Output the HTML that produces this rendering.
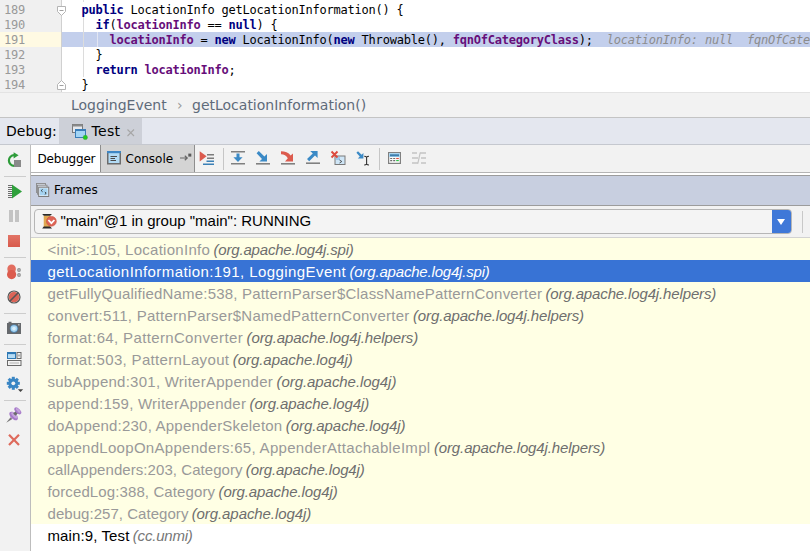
<!DOCTYPE html>
<html><head><meta charset="utf-8"><title>Debug</title>
<style>
html,body{margin:0;padding:0}
body{width:810px;height:551px;overflow:hidden;background:#fff;position:relative;font-family:"DejaVu Sans","Liberation Sans",sans-serif;}
.abs{position:absolute}
svg{position:absolute;overflow:visible}
#code{left:0;top:0;width:810px;height:92px;background:#fff;overflow:hidden}
#gutter{left:0;top:0;width:61px;height:92px;background:#f0f0f0;border-right:1px solid #d0d0d0}
.ln{position:absolute;left:4px;width:40px;height:15px;font:12px/15px "DejaVu Sans Mono","Liberation Mono",monospace;color:#999;letter-spacing:-0.22px}
.cl{position:absolute;left:81.4px;height:15px;white-space:pre;font:12px/15px "DejaVu Sans Mono","Liberation Mono",monospace;color:#000;letter-spacing:-0.22px}
.k{color:#000080;font-weight:bold}
.f{color:#660e7a;font-weight:bold}
.h{color:#8c8c8c;font-style:italic}
#crumb{left:0;top:92px;width:810px;height:26px;background:#f2f2f2;border-top:1px solid #e3e3e3;box-sizing:border-box;border-bottom:1px solid #c4c4c4}
#crumb span{position:absolute;top:4px;font-size:14px;line-height:16px;color:#5f6b7a;white-space:pre}
#dbg{left:0;top:118px;width:810px;height:27px;background:#e4e7ef;border-bottom:1px solid #c5c8cf;box-sizing:border-box}
#dbg span{position:absolute;font-size:14px;line-height:18px;color:#000}
#side{left:0;top:145px;width:30px;height:406px;background:#f2f2f2;border-right:1px solid #bdbdbd}
.sep{position:absolute;left:4px;width:22px;height:1px;background:#cdcdcd}
#tabs{left:31px;top:145px;width:779px;height:27px;background:#f2f2f2}
#tabs span{position:absolute;font-size:12px;line-height:16px;color:#000}
.vsep{position:absolute;width:1px;background:#c6c6c6}
.row{position:absolute;left:31px;width:779px;height:22px;line-height:22px;font-family:"Liberation Sans","DejaVu Sans",sans-serif;font-size:15px;color:#999;white-space:pre;background:#ffffe4}
.row span{position:absolute;left:16.5px;top:1px}
.row i{position:absolute;top:1px;font-style:italic;color:#6e6e6e}
.row.sel{background:#3873d5;color:#fff}
.row.sel i{color:#fff}
.row.last{background:#fff;color:#000}
.row.last i{color:#777}
</style></head><body>
<div id="code" class="abs">
 <div class="abs" style="left:0;top:32px;width:810px;height:15px;background:#c3cfec"></div>
 <div id="gutter" class="abs"></div>
 <div class="abs" style="left:0;top:32px;width:61px;height:15px;background:#fffae3"></div>
 <div class="ln" style="top:3px">189</div>
 <div class="ln" style="top:18px">190</div>
 <div class="ln" style="top:33px">191</div>
 <div class="ln" style="top:48px">192</div>
 <div class="ln" style="top:63px">193</div>
 <div class="ln" style="top:78px">194</div>
 <div class="abs" style="left:83px;top:0;width:1px;height:2px;background:#dcdcdc"></div>
 <div class="abs" style="left:83px;top:17px;width:1px;height:60px;background:#dcdcdc"></div>
 <div class="abs" style="left:97px;top:32px;width:1px;height:15px;background:#e2e6f2"></div>
 <svg style="left:57px;top:6px" width="10" height="10" viewBox="0 0 10 10"><path d="M0.5 0.5H8.5V5.5L4.5 9.5L0.5 5.5Z" fill="#fff" stroke="#b4b4b4"/><path d="M2.5 4.5H6.5" stroke="#a0a0a0"/></svg>
 <svg style="left:57px;top:80px" width="10" height="10" viewBox="0 0 10 10"><path d="M0.5 9.5H8.5V4.5L4.5 0.5L0.5 4.5Z" fill="#fff" stroke="#b4b4b4"/><path d="M2.5 5.5H6.5" stroke="#a0a0a0"/></svg>
 <div class="cl" style="top:3px"><span class="k">public</span> LocationInfo getLocationInformation() {</div>
 <div class="cl" style="top:18px">  <span class="k">if</span>(<span class="f">locationInfo</span> == <span class="k">null</span>) {</div>
 <div class="cl" style="top:33px">    <span class="f">locationInfo</span> = <span class="k">new</span> LocationInfo(<span class="k">new</span> Throwable(), <span class="f">fqnOfCategoryClass</span>);  <span class="h">locationInfo: null  fqnOfCategoryClass: "org.apache.log4j.Category"</span></div>
 <div class="cl" style="top:48px">  }</div>
 <div class="cl" style="top:63px">  <span class="k">return</span> <span class="f">locationInfo</span>;</div>
 <div class="cl" style="top:78px">}</div>
</div>
<div id="crumb" class="abs"><span style="left:71px">LoggingEvent</span><span style="left:177px;color:#999">›</span><span style="left:192px">getLocationInformation()</span></div>
<div id="dbg" class="abs">
 <div class="abs" style="left:59px;top:0;width:83px;height:26px;background:#cdd0d8"></div>
 <span style="left:6px;top:4px">Debug:</span>
 <svg style="left:72px;top:6px" width="16" height="16" viewBox="0 0 16 16"><rect x="0.5" y="0.5" width="10" height="8" fill="#e6e8ec" stroke="#7a7a7a"/><rect x="0.5" y="0.5" width="10" height="2" fill="#8a8a8a"/><rect x="3.5" y="5.5" width="10" height="8" fill="#a3d5f5" stroke="#3a7db8"/><rect x="3.5" y="5" width="10" height="2" fill="#3a7db8"/><circle cx="13.3" cy="13.4" r="2.2" fill="#1ccf1c" stroke="#3f9a3f" stroke-width="0.5"/></svg>
 <span style="left:91.5px;top:4px;letter-spacing:0.3px">Test</span>
 <svg style="left:127px;top:11px" width="8" height="8" viewBox="0 0 8 8"><path d="M0.5 0.5L7 7M7 0.5L0.5 7" stroke="#a6a6a6" stroke-width="1.1" fill="none"/></svg>
</div>
<div id="side" class="abs">
 <!-- rerun -->
 <svg style="left:6px;top:7px" width="16" height="16" viewBox="0 0 16 16"><path d="M8.2 3.2A5.3 5.3 0 1 0 8.2 13.8" fill="none" stroke="#2e9c3a" stroke-width="2.2"/><path d="M7.6 0.2L12.6 3.3L7.6 6.6Z" fill="#2e9c3a"/><rect x="8" y="8" width="7" height="7" fill="#8a8a8a"/></svg>
 <div class="sep" style="top:31px"></div>
 <!-- resume -->
 <svg style="left:7px;top:39px" width="16" height="16" viewBox="0 0 16 16"><path d="M1 1.5H5M1 3.5H5M1 5.5H5M1 7.5H5M1 9.5H5M1 11.5H5M1 13.5H5" stroke="#6e6e6e" stroke-width="1"/><path d="M5 0.5L15 7.5L5 14.5Z" fill="#2fa03c"/></svg>
 <!-- pause -->
 
 <div class="abs" style="left:9px;top:65px;width:4px;height:12px;background:#c3c3c3"></div>
 <div class="abs" style="left:15px;top:65px;width:4px;height:12px;background:#c3c3c3"></div>
 <!-- stop -->
 <div class="abs" style="left:8px;top:90px;width:12px;height:12px;background:linear-gradient(#e27466,#d85a4c)"></div>
 <div class="sep" style="top:112px"></div>
 <!-- view breakpoints -->
 <svg style="left:6px;top:119px" width="18" height="16" viewBox="0 0 18 16"><circle cx="5.6" cy="4.9" r="4.3" fill="#e26d5f"/><circle cx="5.6" cy="10.6" r="4.6" fill="#dc5b4d"/><circle cx="13" cy="6" r="1.9" fill="#909090"/><circle cx="13" cy="11" r="1.9" fill="#909090"/><circle cx="13" cy="6" r="0.8" fill="#c8c8c8"/><circle cx="13" cy="11" r="0.8" fill="#c8c8c8"/></svg>
 <!-- mute -->
 <svg style="left:7px;top:145px" width="14" height="14" viewBox="0 0 14 14"><circle cx="7" cy="7" r="5.2" fill="#dc6457"/><circle cx="7" cy="7" r="6" fill="none" stroke="#555" stroke-width="1.2"/><path d="M2.8 11.2L11.2 2.8" stroke="#555" stroke-width="1.6"/></svg>
 <div class="sep" style="top:168px"></div>
 <!-- camera -->
 <svg style="left:7px;top:176px" width="14" height="13" viewBox="0 0 14 13"><path d="M0 2H1.5V0.8H4.5V2H14V13H0Z" fill="#66696d"/><circle cx="7" cy="7.6" r="4.2" fill="#4f86b4"/><circle cx="7" cy="7.6" r="3.3" fill="#a9d6f3"/><circle cx="7" cy="7.6" r="1.8" fill="#d8eefb"/><rect x="11" y="3.2" width="1.6" height="1.2" fill="#c8c8c8"/></svg>
 <div class="sep" style="top:199px"></div>
 <!-- layout -->
 <svg style="left:7px;top:207px" width="15" height="14" viewBox="0 0 15 14"><rect x="0.5" y="0.5" width="8" height="6" fill="#b6dcf5" stroke="#2f79b5"/><rect x="0.5" y="0.5" width="8" height="1.6" fill="#2f79b5"/><rect x="10" y="0.5" width="4" height="6" fill="#f4f4f4" stroke="#6a6a6a"/><rect x="11.5" y="2.5" width="1" height="2" fill="#6a6a6a"/><rect x="0.5" y="8.5" width="13.5" height="5" fill="#f4f4f4" stroke="#6a6a6a"/><rect x="2.5" y="10.5" width="9.5" height="1" fill="#b0b0b0"/></svg>
 <!-- gear -->
 <svg style="left:6px;top:231px" width="18" height="17" viewBox="0 0 18 17"><g transform="translate(7.3,7.3)"><circle r="4.9" fill="#3a86c4"/><g fill="#3a86c4"><rect x="-1.5" y="-6.5" width="3" height="13"/><rect x="-1.5" y="-6.5" width="3" height="13" transform="rotate(45)"/><rect x="-1.5" y="-6.5" width="3" height="13" transform="rotate(90)"/><rect x="-1.5" y="-6.5" width="3" height="13" transform="rotate(135)"/></g><circle r="1.9" fill="#f2f2f2"/></g><path d="M11.8 13.2H17.2L14.5 16Z" fill="#444"/></svg>
 <div class="sep" style="top:255px"></div>
 <!-- pin -->
 <svg style="left:5px;top:262px" width="18" height="17" viewBox="0 0 18 17"><path d="M1.2 15.8L5.6 10.2L7.4 12Z" fill="#7a7a7a"/><ellipse cx="8.6" cy="9" rx="5.3" ry="3" transform="rotate(45 8.6 9)" fill="#a679c9"/><ellipse cx="9.4" cy="8.2" rx="4" ry="1.9" transform="rotate(45 9.4 8.2)" fill="#c3a3dc"/><rect x="9" y="4.6" width="3.2" height="3.6" transform="rotate(45 10.6 6.4)" fill="#6b6b6b"/><ellipse cx="12.8" cy="3.8" rx="4.3" ry="2.3" transform="rotate(45 12.8 3.8)" fill="#a679c9"/><ellipse cx="13.2" cy="3.4" rx="3" ry="1.2" transform="rotate(45 13.2 3.4)" fill="#c3a3dc"/></svg>
 <!-- close -->
 <svg style="left:8px;top:289px" width="12" height="12" viewBox="0 0 12 12"><path d="M1 0.8L11 11M11 0.8L1 11" stroke="#de6a5c" stroke-width="2.2" fill="none"/></svg>
</div>
<div id="tabs" class="abs">
 <div class="abs" style="left:0;top:0;width:69px;height:31px;background:#fff"></div>
 <div class="abs" style="left:69px;top:0;width:95px;height:28px;background:#d4d4d4;border:1px solid #8e8e8e;border-top:none;box-sizing:border-box"></div>
 <span style="left:6.5px;top:6px;letter-spacing:-0.2px">Debugger</span>
 <!-- console icon -->
 <svg style="left:76px;top:6px" width="14" height="14" viewBox="0 0 14 14"><rect x="0.75" y="0.75" width="12.5" height="12" fill="#b2dbf5" stroke="#6c6c6c" stroke-width="1.5"/><rect x="0" y="0" width="14" height="2.2" fill="#3d86c4"/><path d="M3.5 5.5H10M3.5 7.5H8M3.5 9.5H9" stroke="#4a4a4a" stroke-width="1"/></svg>
 <span style="left:94.5px;top:6px">Console</span>
 <!-- pin -->
 <svg style="left:149px;top:8px" width="12" height="10" viewBox="0 0 12 10"><path d="M0 5H7M4.8 2.8L7.2 5L4.8 7.2" stroke="#666" stroke-width="1.2" fill="none"/><rect x="8.3" y="0.6" width="3" height="3" fill="#5a5a5a"/></svg>
 <!-- show exec point -->
 <svg style="left:168px;top:6px" width="16" height="15" viewBox="0 0 16 15"><path d="M0.7 0.2L7.6 5.2L0.7 10.4Z" fill="#dc5b4e"/><path d="M8 3.8H15M8 7.2H15" stroke="#7c7c7c" stroke-width="1.6"/><path d="M7.5 10.3H15M4 13.3H15" stroke="#3b80b6" stroke-width="1.5"/></svg>
 <div class="vsep" style="left:192px;top:3px;height:22px"></div>
 <!-- step over -->
 <svg style="left:200px;top:6px" width="14" height="14" viewBox="0 0 14 14"><path d="M0 0.8H14M0 12.8H14" stroke="#808080" stroke-width="1.6"/><path d="M5.5 2.5H8.5V6.2H11.6L7 11L2.4 6.2H5.5Z" fill="#3b8ac6"/></svg>
 <!-- step into -->
 <svg style="left:225px;top:6px" width="14" height="14" viewBox="0 0 14 14"><path d="M0 12.8H14" stroke="#808080" stroke-width="1.6"/><path d="M0.6 2.2L2.8 0L8.4 5.6L11 3V10.6H3.4L6 8Z" fill="#3b8ac6"/></svg>
 <!-- force step into -->
 <svg style="left:250px;top:6px" width="14" height="14" viewBox="0 0 14 14"><path d="M0 12.8H14" stroke="#808080" stroke-width="1.6"/><path d="M0 0.2C4 0.2 7.6 1.4 9.6 4.4L12 2.4V10.6H4L6.8 7.2C5.4 4.6 3 3.4 0 3.2Z" fill="#dc5b4e"/></svg>
 <!-- step out -->
 <svg style="left:275px;top:6px" width="14" height="14" viewBox="0 0 14 14"><path d="M0 12.2H14" stroke="#808080" stroke-width="1.6"/><path d="M1 8L3.2 10.2L9 4.4L11.6 7V0H4.2L6.8 2.4Z" fill="#3b8ac6"/></svg>
 <!-- drop frame -->
 <svg style="left:300px;top:6px" width="15" height="14" viewBox="0 0 15 14"><rect x="4" y="5" width="10" height="8.5" fill="#cfe6f7" stroke="#7a7a7a"/><rect x="5" y="6" width="4" height="3" fill="#9ccbee"/><path d="M8.5 9L10.8 10.5L8.5 12" stroke="#444" stroke-width="0.9" fill="none"/><path d="M0.5 0.5L6.5 6.5M6.5 0.5L0.5 6.5" stroke="#dc4a3e" stroke-width="1.9"/></svg>
 <!-- run to cursor -->
 <svg style="left:325px;top:6px" width="15" height="15" viewBox="0 0 15 15"><path d="M0.4 1.8L2 0.2L5.6 3.8L7.4 2V7.6H1.8L3.8 5.6Z" fill="#3b8ac6"/><path d="M8.2 5.2C9.4 5.2 10.2 5.6 10.6 6.2C11 5.6 11.8 5.2 13 5.2M8.2 14C9.4 14 10.2 13.6 10.6 13C11 13.6 11.8 14 13 14M10.6 6.2V13" stroke="#333" stroke-width="1.1" fill="none"/></svg>
 <div class="vsep" style="left:348px;top:3px;height:22px"></div>
 <!-- evaluate -->
 <svg style="left:357px;top:7px" width="13" height="12" viewBox="0 0 13 12"><rect x="0.6" y="0.6" width="11.8" height="10.8" fill="#fafafa" stroke="#808080" stroke-width="1.2"/><rect x="1.2" y="1.2" width="10.6" height="3.8" fill="#9fd2f2"/><rect x="2" y="2.3" width="9" height="2" fill="#3f7eac"/><path d="M2.2 6.5H4.2M5.2 6.5H7.2M2.2 8.6H4.2M5.2 8.6H7.2" stroke="#6a6a6a" stroke-width="1.1"/><path d="M8.2 6.5H10.8" stroke="#dc4a3e" stroke-width="1.1"/><path d="M8.2 8.6H10.8" stroke="#22c03c" stroke-width="1.1"/></svg>
 <!-- trace (disabled) -->
 <svg style="left:381px;top:7px" width="15" height="12" viewBox="0 0 15 12"><path d="M0 1H5M8 1H14M0 6H6M9 6H14M0 11H6M9 11H14" stroke="#c4c4c4" stroke-width="1.6"/><path d="M5.8 11.6L8.2 0.6" stroke="#c4c4c4" stroke-width="1.2"/></svg>
</div>
<div class="abs" style="left:31px;top:172px;width:779px;height:3px;background:#fff;border-top:1px solid #b4b4b4;box-sizing:border-box"></div>
<div class="abs" style="left:31px;top:173px;width:69px;height:2px;background:#fff"></div>
<div class="abs" style="left:31px;top:175px;width:779px;height:31px;background:#c8cfe0;border-top:1px solid #9c9c9c;border-bottom:1px solid #9c9c9c;box-sizing:border-box">
 <svg style="left:5px;top:7px" width="14" height="14" viewBox="0 0 14 14"><rect x="0.5" y="0.5" width="9" height="9" fill="#d9dee9" stroke="#8a8a8a" stroke-width="0.9"/><rect x="1.5" y="2.2" width="9.5" height="9" fill="#d9dee9" stroke="#8a8a8a" stroke-width="0.9"/><rect x="2.7" y="4.2" width="10" height="9.3" fill="#eef1f5" stroke="#7c7c7c" stroke-width="1"/><rect x="3.8" y="5.3" width="7.8" height="7.1" fill="#a6d4f2"/><path d="M6.6 6.4L5.2 7.6L6.6 8.8M8.8 9L10.2 10.2L8.8 11.4" stroke="#333" stroke-width="0.9" fill="none"/></svg>
 <span class="abs" style="left:23px;top:6px;font-size:12px;line-height:16px;color:#000">Frames</span>
</div>
<div class="abs" style="left:31px;top:206px;width:779px;height:31px;background:#f2f2f2;border-bottom:1px solid #d2d2d2"></div>
<div class="abs" style="left:34px;top:209px;width:758px;height:25px;background:#f4f4f4;border:1px solid #b6b6b6;border-radius:4px;box-sizing:border-box;overflow:hidden">
 <div class="abs" style="right:-1px;top:0;width:20px;height:24px;background:#3f78d8"></div>
 <div class="abs" style="right:6px;top:9px;width:0;height:0;border-left:4.3px solid transparent;border-right:4.3px solid transparent;border-top:6.3px solid #fff"></div>
 <!-- thread icon -->
 <svg style="left:7px;top:4px" width="15" height="15" viewBox="0 0 15 15"><rect x="1.8" y="1.5" width="6.4" height="12" fill="#f0c070"/><path d="M1.8 3H8.2M1.8 5H8.2M1.8 7H8.2M1.8 9H8.2M1.8 11H8.2M1.8 13H8.2" stroke="#c98a2e" stroke-width="0.9"/><path d="M0.2 0H10L8.2 1.8H1.8Z" fill="#2a2a2a"/><path d="M0.2 14.4H10L8.2 12.6H1.8Z" fill="#2a2a2a"/><circle cx="9.4" cy="7.3" r="4.9" fill="#dd6456" stroke="#c8503f" stroke-width="0.6"/><path d="M6.4 6L9.4 9.2L12.4 6" stroke="#fff" stroke-width="1.7" fill="none"/></svg>
 <span class="abs" style="left:25.5px;top:2px;font:15px/18px 'Liberation Sans','DejaVu Sans',sans-serif;color:#000;white-space:pre">"main"@1 in group "main": RUNNING</span>
</div>
<div class="abs" style="left:802px;top:211px;width:1px;height:22px;background:#c8c8c8"></div>
<div class="row" style="top:238px"><span style="letter-spacing:0.276px">&lt;init&gt;:105, LocationInfo</span><i style="left:182.5px;letter-spacing:-0.186px">(org.apache.log4j.spi)</i></div>
<div class="row sel" style="top:260px"><span style="letter-spacing:0.415px">getLocationInformation:191, LoggingEvent</span><i style="left:318.5px;letter-spacing:-0.186px">(org.apache.log4j.spi)</i></div>
<div class="row" style="top:282px"><span style="letter-spacing:0.193px">getFullyQualifiedName:538, PatternParser$ClassNamePatternConverter</span><i style="left:514.5px;letter-spacing:-0.138px">(org.apache.log4j.helpers)</i></div>
<div class="row" style="top:304px"><span style="letter-spacing:0.271px">convert:511, PatternParser$NamedPatternConverter</span><i style="left:382.0px;letter-spacing:-0.127px">(org.apache.log4j.helpers)</i></div>
<div class="row" style="top:326px"><span style="letter-spacing:0.354px">format:64, PatternConverter</span><i style="left:215.5px;letter-spacing:-0.104px">(org.apache.log4j.helpers)</i></div>
<div class="row" style="top:348px"><span style="letter-spacing:0.335px">format:503, PatternLayout</span><i style="left:201.8px;letter-spacing:-0.056px">(org.apache.log4j)</i></div>
<div class="row" style="top:370px"><span style="letter-spacing:0.253px">subAppend:301, WriterAppender</span><i style="left:245.5px;letter-spacing:-0.061px">(org.apache.log4j)</i></div>
<div class="row" style="top:392px"><span style="letter-spacing:0.241px">append:159, WriterAppender</span><i style="left:218.5px;letter-spacing:-0.067px">(org.apache.log4j)</i></div>
<div class="row" style="top:414px"><span style="letter-spacing:0.213px">doAppend:230, AppenderSkeleton</span><i style="left:254.8px;letter-spacing:-0.067px">(org.apache.log4j)</i></div>
<div class="row" style="top:436px"><span style="letter-spacing:0.298px">appendLoopOnAppenders:65, AppenderAttachableImpl</span><i style="left:402.9px;letter-spacing:-0.119px">(org.apache.log4j.helpers)</i></div>
<div class="row" style="top:458px"><span style="letter-spacing:0.061px">callAppenders:203, Category</span><i style="left:214.8px;letter-spacing:-0.111px">(org.apache.log4j)</i></div>
<div class="row" style="top:480px"><span style="letter-spacing:0.112px">forcedLog:388, Category</span><i style="left:187.5px;letter-spacing:-0.094px">(org.apache.log4j)</i></div>
<div class="row" style="top:502px"><span style="letter-spacing:0.045px">debug:257, Category</span><i style="left:160.7px;letter-spacing:-0.083px">(org.apache.log4j)</i></div>
<div class="row last" style="top:524px"><span style="letter-spacing:0.115px">main:9, Test</span><i style="left:101.8px;letter-spacing:-0.200px">(cc.unmi)</i></div>
</body></html>
